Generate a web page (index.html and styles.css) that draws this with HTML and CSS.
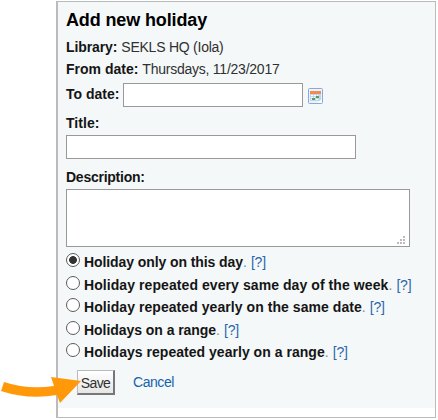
FILE: index.html
```html
<!DOCTYPE html>
<html lang="en">
<head>
<meta charset="utf-8">
<title>Add new holiday</title>
<link rel="stylesheet" href="styles.css">
</head>
<body>
<form class="panel">
  <div class="content">
    <h3 class="heading">Add new holiday</h3>
    <div class="row"><b class="lib">Library:</b><span class="value">SEKLS HQ (Iola)</span></div>
    <div class="row"><b class="from">From date:</b><span class="value">Thursdays, 11/23/2017</span></div>
    <div class="row date-row"><b class="to">To date:</b><span class="box date"></span>
      <svg class="calendar" width="15" height="16" viewBox="0 0 15 16"><rect x=".5" y=".5" width="14" height="15" rx="1" fill="#eaf3fc" stroke="#85aae2"/><path d="M2 3h11v3H2z" fill="#f58b4b"/><path d="M2 6h11v7H2z" fill="#c5d5eb"/><path d="M3 7h2v1H3zm3 0h2v1H6zm3 0h1v1H9zM3 9h2v1H3zm3 0h1v1H6zM3 11h1v1H3zm5 0h2v1H8z" fill="#fff"/><path d="M8 8h3v2H8zM4 10h3v2H4z" fill="#55a05c"/><path d="M9 15l5-4v4z" fill="#fff"/></svg>
    </div>
    <div class="row title-row"><b class="title">Title:</b></div>
    <div class="box title-box"></div>
    <div class="row desc-row"><b class="desc">Description:</b></div>
    <div class="box area"><svg width="9" height="9" viewBox="0 0 9 9"><path d="M6 0h2v2H6zM3 3h2v2H3zm3 0h2v2H6zM0 6h2v2H0zm3 0h2v2H3zm3 0h2v2H6z" fill="#bcbcbc"/></svg></div>
    <div class="options">
      <label class="option"><i class="radio on"></i><b class="o1">Holiday only on this day</b><span class="dot">.</span><a class="help">[?]</a></label>
      <label class="option"><i class="radio"></i><b class="o2">Holiday repeated every same day of the week</b><span class="dot">.</span><a class="help">[?]</a></label>
      <label class="option"><i class="radio"></i><b class="o3">Holiday repeated yearly on the same date</b><span class="dot">.</span><a class="help">[?]</a></label>
      <label class="option"><i class="radio"></i><b class="o4">Holidays on a range</b><span class="dot">.</span><a class="help">[?]</a></label>
      <label class="option"><i class="radio"></i><b class="o5">Holidays repeated yearly on a range</b><span class="dot">.</span><a class="help">[?]</a></label>
    </div>
    <div class="actions"><span class="save">Save</span><a class="cancel">Cancel</a></div>
  </div>
</form>
<svg class="arrow" width="82" height="30" viewBox="0 0 82 30"><path d="M4 5Q28 13 54 9L51 0 81 4 60 26 57 18Q28 23 1 14Z" fill="#ff9909"/></svg>
</body>
</html>
```
FILE: styles.css
```css
* { box-sizing: border-box; }
body { margin: 0; padding: 1px 0 0 56px; background: #fff; width: 438px; height: 420px; overflow: hidden; font: 14px/22px "Liberation Sans", Arial, sans-serif; color: #303030; }
b { color: #151515; }
.panel { width: 380px; height: 417px; margin: 0; border: 1px solid #bbb; border-left-width: 2px; background: #fff; }
.content { height: 406px; padding: 5px 0 0 8px; background: #f4f8f9; }
.heading { margin: 0; font-size: 18px; line-height: 26px; height: 29px; color: #000; letter-spacing: -.13px; }
.row { display: flex; height: 22px; white-space: nowrap; }
.row b { margin-right: 4px; }
.lib { letter-spacing: -.1px; }
.value { letter-spacing: -.24px; }
.date-row { height: 30px; line-height: 29px; }
.title-row { height: 25px; line-height: 27px; }
.title { letter-spacing: .05px; }
.desc-row { height: 30px; line-height: 36px; }
.desc { letter-spacing: -.25px; }
.box { display: block; border: 1px solid #999; background: #fff; }
.date { width: 180px; height: 24px; margin: 3px 5px 0 0; }
.calendar { margin-top: 8px; }
.title-box { width: 290px; height: 24px; }
.area { display: flex; justify-content: flex-end; align-items: flex-end; width: 344px; height: 58px; padding: 0 3px 1px 0; }
.options { display: grid; grid-template-rows: 23px 22px 23px 22px 22px; margin-top: 3px; }
.option { display: flex; white-space: nowrap; line-height: 24px; }
.radio { width: 14px; height: 14px; margin: 3px 4px 0 0; border: 1px solid #5b5b5b; border-radius: 50%; background: #fff; flex: none; }
.on { background: radial-gradient(circle, #333 0 3.5px, #fff 4.3px); }
.o1 { letter-spacing: -.09px; }
.o2 { letter-spacing: .075px; }
.o3 { letter-spacing: .06px; }
.o4 { letter-spacing: -.05px; }
.o5 { letter-spacing: .03px; }
.dot { color: #888; width: 4px; }
.help { margin-left: 4px; color: #2d67aa; letter-spacing: -.2px; }
.actions { display: flex; margin: 8px 0 0 11px; line-height: 25px; letter-spacing: -.45px; }
.save { width: 38px; height: 25px; border: 1px solid #bbb; border-right: 2px solid #777; border-bottom: 2px solid #777; background: linear-gradient(#fff, #e6e6e6); text-align: center; line-height: 24px; letter-spacing: -.6px; }
.cancel { margin-left: 18px; color: #1662ab; }
.arrow { position: absolute; left: 0; top: 377px; }
```
